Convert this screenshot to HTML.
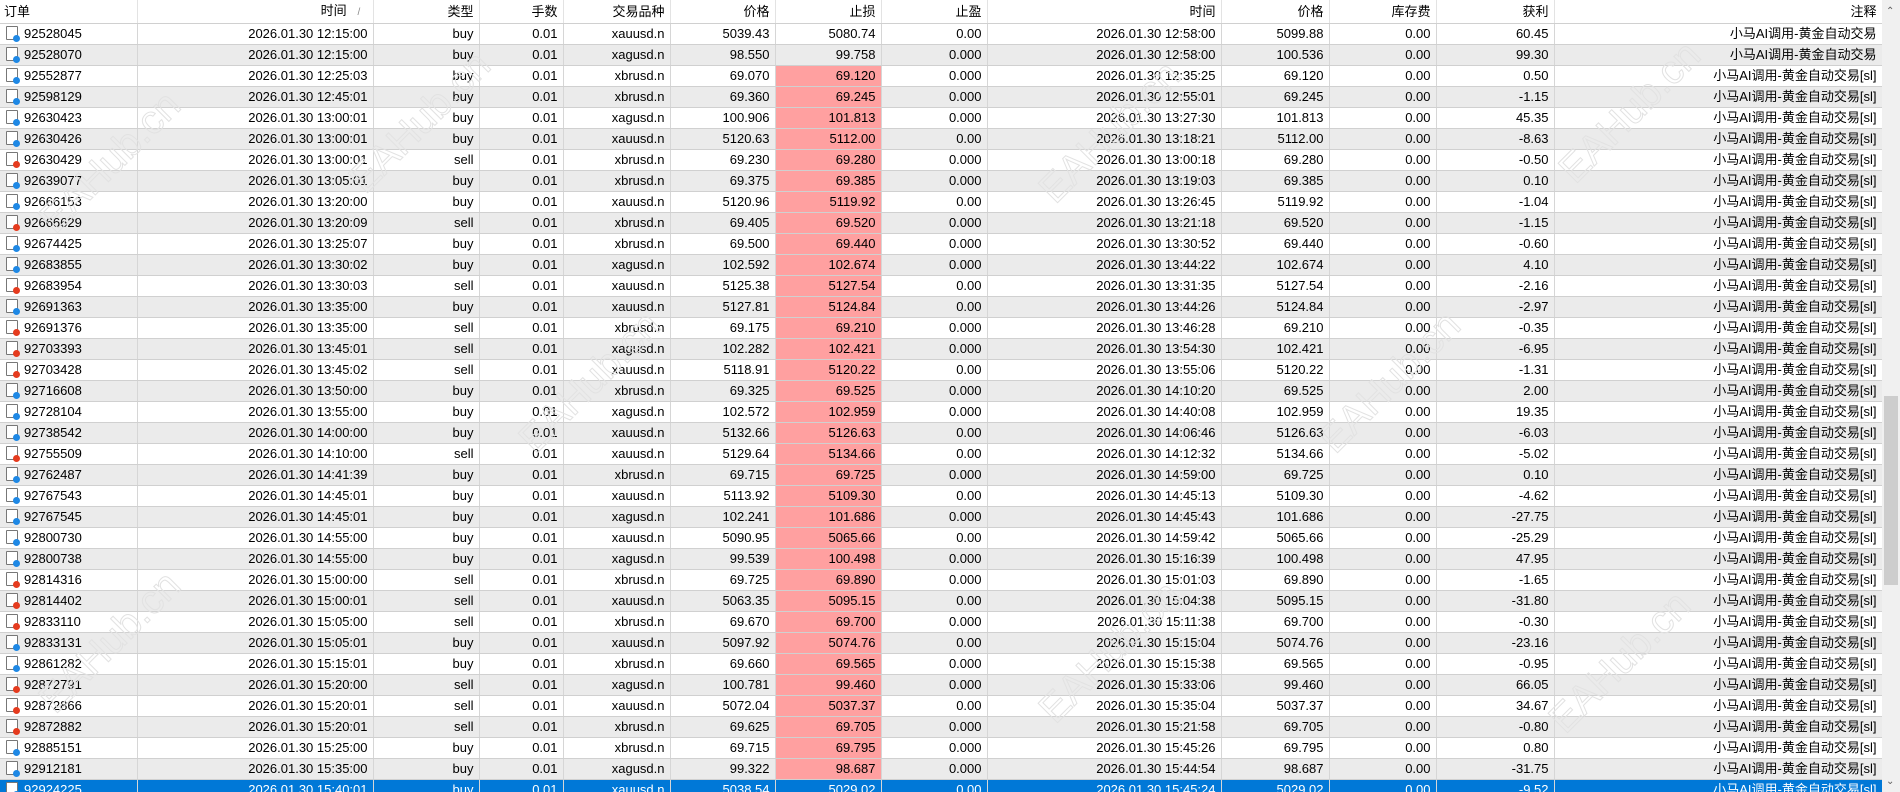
<!DOCTYPE html>
<html><head><meta charset="utf-8">
<style>
html,body{margin:0;padding:0;width:1900px;height:792px;overflow:hidden;background:#fff}
body{font-family:"Liberation Sans","Noto Sans CJK SC",sans-serif;font-size:13px;color:#000;position:relative}
table{border-collapse:collapse;table-layout:fixed;width:1882px;position:absolute;left:0;top:0}
td,th{height:20px;padding:0 5px 0 4px;text-align:right;white-space:nowrap;overflow:hidden;border-right:1px solid #d6d6d6;border-bottom:1px solid #d0d0d0;line-height:20px}
th{height:23px;font-weight:normal;background:#fff;border-right:1px solid #e3e3e3}
th:first-child,td:first-child{text-align:left}
tr:nth-child(odd) td{background:#ebebeb}
td.p{background:#ffa0a0 !important}
tr.sel td{background:#0078d7 !important;color:#fff}
.i{display:inline-block;width:10px;height:12px;border:1px solid #777;border-radius:1px;background:#fff;position:relative;vertical-align:-2px;margin:0 6px 0 2px}
.i:after{content:"";position:absolute;right:-3px;bottom:-3px;width:7px;height:7px;border-radius:50%;background:#1e88e5}
.s:after{background:#e53b1e}
.sb{position:absolute;left:1882px;top:0;width:18px;height:792px;background:#f0f0f0}
.th{position:absolute;left:1884px;top:396px;width:14px;height:189px;background:#cdcdcd}
.wm{position:absolute;color:transparent;-webkit-text-stroke:1px #e2e2e2;font-size:40px;transform:rotate(-45deg);font-family:"Liberation Sans",sans-serif;pointer-events:none}
</style></head><body>
<table>
<colgroup><col style="width:137px"><col style="width:236px"><col style="width:106px"><col style="width:84px"><col style="width:107px"><col style="width:105px"><col style="width:106px"><col style="width:106px"><col style="width:234px"><col style="width:108px"><col style="width:107px"><col style="width:118px"><col style="width:328px"></colgroup>
<tr><th>订单</th><th>时间 &nbsp;&nbsp;<span style="color:#888;font-size:10px">/</span>&nbsp;&nbsp;</th><th>类型</th><th>手数</th><th>交易品种</th><th>价格</th><th>止损</th><th>止盈</th><th>时间</th><th>价格</th><th>库存费</th><th>获利</th><th>注释</th></tr>
<tr><td><span class="i"></span>92528045</td><td>2026.01.30 12:15:00</td><td>buy</td><td>0.01</td><td>xauusd.n</td><td>5039.43</td><td>5080.74</td><td>0.00</td><td>2026.01.30 12:58:00</td><td>5099.88</td><td>0.00</td><td>60.45</td><td>小马AI调用-黄金自动交易</td></tr>
<tr><td><span class="i"></span>92528070</td><td>2026.01.30 12:15:00</td><td>buy</td><td>0.01</td><td>xagusd.n</td><td>98.550</td><td>99.758</td><td>0.000</td><td>2026.01.30 12:58:00</td><td>100.536</td><td>0.00</td><td>99.30</td><td>小马AI调用-黄金自动交易</td></tr>
<tr><td><span class="i"></span>92552877</td><td>2026.01.30 12:25:03</td><td>buy</td><td>0.01</td><td>xbrusd.n</td><td>69.070</td><td class="p">69.120</td><td>0.000</td><td>2026.01.30 12:35:25</td><td>69.120</td><td>0.00</td><td>0.50</td><td>小马AI调用-黄金自动交易[sl]</td></tr>
<tr><td><span class="i"></span>92598129</td><td>2026.01.30 12:45:01</td><td>buy</td><td>0.01</td><td>xbrusd.n</td><td>69.360</td><td class="p">69.245</td><td>0.000</td><td>2026.01.30 12:55:01</td><td>69.245</td><td>0.00</td><td>-1.15</td><td>小马AI调用-黄金自动交易[sl]</td></tr>
<tr><td><span class="i"></span>92630423</td><td>2026.01.30 13:00:01</td><td>buy</td><td>0.01</td><td>xagusd.n</td><td>100.906</td><td class="p">101.813</td><td>0.000</td><td>2026.01.30 13:27:30</td><td>101.813</td><td>0.00</td><td>45.35</td><td>小马AI调用-黄金自动交易[sl]</td></tr>
<tr><td><span class="i"></span>92630426</td><td>2026.01.30 13:00:01</td><td>buy</td><td>0.01</td><td>xauusd.n</td><td>5120.63</td><td class="p">5112.00</td><td>0.00</td><td>2026.01.30 13:18:21</td><td>5112.00</td><td>0.00</td><td>-8.63</td><td>小马AI调用-黄金自动交易[sl]</td></tr>
<tr><td><span class="i s"></span>92630429</td><td>2026.01.30 13:00:01</td><td>sell</td><td>0.01</td><td>xbrusd.n</td><td>69.230</td><td class="p">69.280</td><td>0.000</td><td>2026.01.30 13:00:18</td><td>69.280</td><td>0.00</td><td>-0.50</td><td>小马AI调用-黄金自动交易[sl]</td></tr>
<tr><td><span class="i"></span>92639077</td><td>2026.01.30 13:05:01</td><td>buy</td><td>0.01</td><td>xbrusd.n</td><td>69.375</td><td class="p">69.385</td><td>0.000</td><td>2026.01.30 13:19:03</td><td>69.385</td><td>0.00</td><td>0.10</td><td>小马AI调用-黄金自动交易[sl]</td></tr>
<tr><td><span class="i"></span>92666153</td><td>2026.01.30 13:20:00</td><td>buy</td><td>0.01</td><td>xauusd.n</td><td>5120.96</td><td class="p">5119.92</td><td>0.00</td><td>2026.01.30 13:26:45</td><td>5119.92</td><td>0.00</td><td>-1.04</td><td>小马AI调用-黄金自动交易[sl]</td></tr>
<tr><td><span class="i s"></span>92666629</td><td>2026.01.30 13:20:09</td><td>sell</td><td>0.01</td><td>xbrusd.n</td><td>69.405</td><td class="p">69.520</td><td>0.000</td><td>2026.01.30 13:21:18</td><td>69.520</td><td>0.00</td><td>-1.15</td><td>小马AI调用-黄金自动交易[sl]</td></tr>
<tr><td><span class="i"></span>92674425</td><td>2026.01.30 13:25:07</td><td>buy</td><td>0.01</td><td>xbrusd.n</td><td>69.500</td><td class="p">69.440</td><td>0.000</td><td>2026.01.30 13:30:52</td><td>69.440</td><td>0.00</td><td>-0.60</td><td>小马AI调用-黄金自动交易[sl]</td></tr>
<tr><td><span class="i"></span>92683855</td><td>2026.01.30 13:30:02</td><td>buy</td><td>0.01</td><td>xagusd.n</td><td>102.592</td><td class="p">102.674</td><td>0.000</td><td>2026.01.30 13:44:22</td><td>102.674</td><td>0.00</td><td>4.10</td><td>小马AI调用-黄金自动交易[sl]</td></tr>
<tr><td><span class="i s"></span>92683954</td><td>2026.01.30 13:30:03</td><td>sell</td><td>0.01</td><td>xauusd.n</td><td>5125.38</td><td class="p">5127.54</td><td>0.00</td><td>2026.01.30 13:31:35</td><td>5127.54</td><td>0.00</td><td>-2.16</td><td>小马AI调用-黄金自动交易[sl]</td></tr>
<tr><td><span class="i"></span>92691363</td><td>2026.01.30 13:35:00</td><td>buy</td><td>0.01</td><td>xauusd.n</td><td>5127.81</td><td class="p">5124.84</td><td>0.00</td><td>2026.01.30 13:44:26</td><td>5124.84</td><td>0.00</td><td>-2.97</td><td>小马AI调用-黄金自动交易[sl]</td></tr>
<tr><td><span class="i s"></span>92691376</td><td>2026.01.30 13:35:00</td><td>sell</td><td>0.01</td><td>xbrusd.n</td><td>69.175</td><td class="p">69.210</td><td>0.000</td><td>2026.01.30 13:46:28</td><td>69.210</td><td>0.00</td><td>-0.35</td><td>小马AI调用-黄金自动交易[sl]</td></tr>
<tr><td><span class="i s"></span>92703393</td><td>2026.01.30 13:45:01</td><td>sell</td><td>0.01</td><td>xagusd.n</td><td>102.282</td><td class="p">102.421</td><td>0.000</td><td>2026.01.30 13:54:30</td><td>102.421</td><td>0.00</td><td>-6.95</td><td>小马AI调用-黄金自动交易[sl]</td></tr>
<tr><td><span class="i s"></span>92703428</td><td>2026.01.30 13:45:02</td><td>sell</td><td>0.01</td><td>xauusd.n</td><td>5118.91</td><td class="p">5120.22</td><td>0.00</td><td>2026.01.30 13:55:06</td><td>5120.22</td><td>0.00</td><td>-1.31</td><td>小马AI调用-黄金自动交易[sl]</td></tr>
<tr><td><span class="i"></span>92716608</td><td>2026.01.30 13:50:00</td><td>buy</td><td>0.01</td><td>xbrusd.n</td><td>69.325</td><td class="p">69.525</td><td>0.000</td><td>2026.01.30 14:10:20</td><td>69.525</td><td>0.00</td><td>2.00</td><td>小马AI调用-黄金自动交易[sl]</td></tr>
<tr><td><span class="i"></span>92728104</td><td>2026.01.30 13:55:00</td><td>buy</td><td>0.01</td><td>xagusd.n</td><td>102.572</td><td class="p">102.959</td><td>0.000</td><td>2026.01.30 14:40:08</td><td>102.959</td><td>0.00</td><td>19.35</td><td>小马AI调用-黄金自动交易[sl]</td></tr>
<tr><td><span class="i"></span>92738542</td><td>2026.01.30 14:00:00</td><td>buy</td><td>0.01</td><td>xauusd.n</td><td>5132.66</td><td class="p">5126.63</td><td>0.00</td><td>2026.01.30 14:06:46</td><td>5126.63</td><td>0.00</td><td>-6.03</td><td>小马AI调用-黄金自动交易[sl]</td></tr>
<tr><td><span class="i s"></span>92755509</td><td>2026.01.30 14:10:00</td><td>sell</td><td>0.01</td><td>xauusd.n</td><td>5129.64</td><td class="p">5134.66</td><td>0.00</td><td>2026.01.30 14:12:32</td><td>5134.66</td><td>0.00</td><td>-5.02</td><td>小马AI调用-黄金自动交易[sl]</td></tr>
<tr><td><span class="i"></span>92762487</td><td>2026.01.30 14:41:39</td><td>buy</td><td>0.01</td><td>xbrusd.n</td><td>69.715</td><td class="p">69.725</td><td>0.000</td><td>2026.01.30 14:59:00</td><td>69.725</td><td>0.00</td><td>0.10</td><td>小马AI调用-黄金自动交易[sl]</td></tr>
<tr><td><span class="i"></span>92767543</td><td>2026.01.30 14:45:01</td><td>buy</td><td>0.01</td><td>xauusd.n</td><td>5113.92</td><td class="p">5109.30</td><td>0.00</td><td>2026.01.30 14:45:13</td><td>5109.30</td><td>0.00</td><td>-4.62</td><td>小马AI调用-黄金自动交易[sl]</td></tr>
<tr><td><span class="i"></span>92767545</td><td>2026.01.30 14:45:01</td><td>buy</td><td>0.01</td><td>xagusd.n</td><td>102.241</td><td class="p">101.686</td><td>0.000</td><td>2026.01.30 14:45:43</td><td>101.686</td><td>0.00</td><td>-27.75</td><td>小马AI调用-黄金自动交易[sl]</td></tr>
<tr><td><span class="i"></span>92800730</td><td>2026.01.30 14:55:00</td><td>buy</td><td>0.01</td><td>xauusd.n</td><td>5090.95</td><td class="p">5065.66</td><td>0.00</td><td>2026.01.30 14:59:42</td><td>5065.66</td><td>0.00</td><td>-25.29</td><td>小马AI调用-黄金自动交易[sl]</td></tr>
<tr><td><span class="i"></span>92800738</td><td>2026.01.30 14:55:00</td><td>buy</td><td>0.01</td><td>xagusd.n</td><td>99.539</td><td class="p">100.498</td><td>0.000</td><td>2026.01.30 15:16:39</td><td>100.498</td><td>0.00</td><td>47.95</td><td>小马AI调用-黄金自动交易[sl]</td></tr>
<tr><td><span class="i s"></span>92814316</td><td>2026.01.30 15:00:00</td><td>sell</td><td>0.01</td><td>xbrusd.n</td><td>69.725</td><td class="p">69.890</td><td>0.000</td><td>2026.01.30 15:01:03</td><td>69.890</td><td>0.00</td><td>-1.65</td><td>小马AI调用-黄金自动交易[sl]</td></tr>
<tr><td><span class="i s"></span>92814402</td><td>2026.01.30 15:00:01</td><td>sell</td><td>0.01</td><td>xauusd.n</td><td>5063.35</td><td class="p">5095.15</td><td>0.00</td><td>2026.01.30 15:04:38</td><td>5095.15</td><td>0.00</td><td>-31.80</td><td>小马AI调用-黄金自动交易[sl]</td></tr>
<tr><td><span class="i s"></span>92833110</td><td>2026.01.30 15:05:00</td><td>sell</td><td>0.01</td><td>xbrusd.n</td><td>69.670</td><td class="p">69.700</td><td>0.000</td><td>2026.01.30 15:11:38</td><td>69.700</td><td>0.00</td><td>-0.30</td><td>小马AI调用-黄金自动交易[sl]</td></tr>
<tr><td><span class="i"></span>92833131</td><td>2026.01.30 15:05:01</td><td>buy</td><td>0.01</td><td>xauusd.n</td><td>5097.92</td><td class="p">5074.76</td><td>0.00</td><td>2026.01.30 15:15:04</td><td>5074.76</td><td>0.00</td><td>-23.16</td><td>小马AI调用-黄金自动交易[sl]</td></tr>
<tr><td><span class="i"></span>92861282</td><td>2026.01.30 15:15:01</td><td>buy</td><td>0.01</td><td>xbrusd.n</td><td>69.660</td><td class="p">69.565</td><td>0.000</td><td>2026.01.30 15:15:38</td><td>69.565</td><td>0.00</td><td>-0.95</td><td>小马AI调用-黄金自动交易[sl]</td></tr>
<tr><td><span class="i s"></span>92872791</td><td>2026.01.30 15:20:00</td><td>sell</td><td>0.01</td><td>xagusd.n</td><td>100.781</td><td class="p">99.460</td><td>0.000</td><td>2026.01.30 15:33:06</td><td>99.460</td><td>0.00</td><td>66.05</td><td>小马AI调用-黄金自动交易[sl]</td></tr>
<tr><td><span class="i s"></span>92872866</td><td>2026.01.30 15:20:01</td><td>sell</td><td>0.01</td><td>xauusd.n</td><td>5072.04</td><td class="p">5037.37</td><td>0.00</td><td>2026.01.30 15:35:04</td><td>5037.37</td><td>0.00</td><td>34.67</td><td>小马AI调用-黄金自动交易[sl]</td></tr>
<tr><td><span class="i s"></span>92872882</td><td>2026.01.30 15:20:01</td><td>sell</td><td>0.01</td><td>xbrusd.n</td><td>69.625</td><td class="p">69.705</td><td>0.000</td><td>2026.01.30 15:21:58</td><td>69.705</td><td>0.00</td><td>-0.80</td><td>小马AI调用-黄金自动交易[sl]</td></tr>
<tr><td><span class="i"></span>92885151</td><td>2026.01.30 15:25:00</td><td>buy</td><td>0.01</td><td>xbrusd.n</td><td>69.715</td><td class="p">69.795</td><td>0.000</td><td>2026.01.30 15:45:26</td><td>69.795</td><td>0.00</td><td>0.80</td><td>小马AI调用-黄金自动交易[sl]</td></tr>
<tr><td><span class="i"></span>92912181</td><td>2026.01.30 15:35:00</td><td>buy</td><td>0.01</td><td>xagusd.n</td><td>99.322</td><td class="p">98.687</td><td>0.000</td><td>2026.01.30 15:44:54</td><td>98.687</td><td>0.00</td><td>-31.75</td><td>小马AI调用-黄金自动交易[sl]</td></tr>
<tr class="sel"><td><span class="i"></span>92924225</td><td>2026.01.30 15:40:01</td><td>buy</td><td>0.01</td><td>xauusd.n</td><td>5038.54</td><td>5029.02</td><td>0.00</td><td>2026.01.30 15:45:24</td><td>5029.02</td><td>0.00</td><td>-9.52</td><td>小马AI调用-黄金自动交易[sl]</td></tr>
</table>
<div class="wm" style="left:20px;top:140px">EAHub.cn</div>
<div class="wm" style="left:330px;top:100px">EAHub.cn</div>
<div class="wm" style="left:1020px;top:110px">EAHub.cn</div>
<div class="wm" style="left:1540px;top:90px">EAHub.cn</div>
<div class="wm" style="left:20px;top:620px">EAHub.cn</div>
<div class="wm" style="left:500px;top:360px">EAHub.cn</div>
<div class="wm" style="left:1020px;top:630px">EAHub.cn</div>
<div class="wm" style="left:1300px;top:360px">EAHub.cn</div>
<div class="wm" style="left:1530px;top:640px">EAHub.cn</div>
<div class="sb"><div style="position:absolute;left:4px;top:6px;font-size:10px;color:#606060">&#8963;</div><div style="position:absolute;left:4px;top:776px;font-size:10px;color:#606060">&#8964;</div></div>
<div class="th"></div>
</body></html>
